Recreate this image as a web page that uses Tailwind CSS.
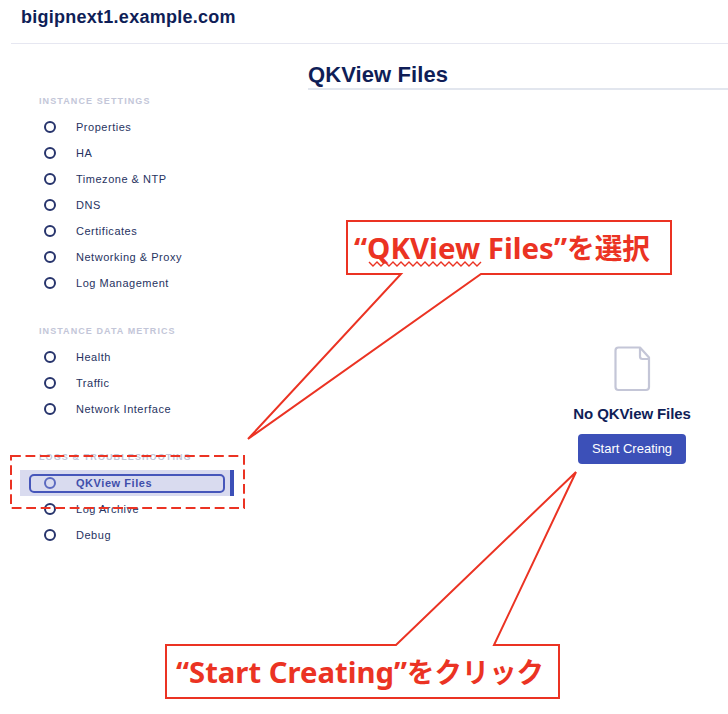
<!DOCTYPE html>
<html lang="ja">
<head>
<meta charset="utf-8">
<title>QKView Files</title>
<script src="https://cdn.jsdelivr.net/npm/@tailwindcss/browser@4"></script>
</head>
<body class="relative h-[714px] w-[728px] overflow-hidden bg-white font-['Liberation_Sans',Arial,sans-serif] text-[#0f1e57]">
<header class="ml-[11px] flex h-[44px] items-center border-b border-[#e6e7f1] pb-[9px] pl-[10px]">
  <h1 class="text-[18px] leading-none font-bold tracking-[0.26px]">bigipnext1.example.com</h1>
</header>
<div class="flex">
  <nav class="flex w-[308px] flex-col gap-[22px] pt-[44.4px] text-[11px] tracking-[0.52px] text-[#27335f]">
    <section>
      <h2 class="flex h-[26px] items-center pt-[1px] pl-[39px] text-[9px] font-bold tracking-[1.1px] text-[#c3c6d8]">INSTANCE SETTINGS</h2>
      <ul>
        <li class="flex h-[26px] items-center pl-[44px]"><i class="mr-[20px] size-[12px] rounded-full border-2 border-[#27346c]"></i>Properties</li>
        <li class="flex h-[26px] items-center pl-[44px]"><i class="mr-[20px] size-[12px] rounded-full border-2 border-[#27346c]"></i>HA</li>
        <li class="flex h-[26px] items-center pl-[44px]"><i class="mr-[20px] size-[12px] rounded-full border-2 border-[#27346c]"></i>Timezone &amp; NTP</li>
        <li class="flex h-[26px] items-center pl-[44px]"><i class="mr-[20px] size-[12px] rounded-full border-2 border-[#27346c]"></i>DNS</li>
        <li class="flex h-[26px] items-center pl-[44px]"><i class="mr-[20px] size-[12px] rounded-full border-2 border-[#27346c]"></i>Certificates</li>
        <li class="flex h-[26px] items-center pl-[44px]"><i class="mr-[20px] size-[12px] rounded-full border-2 border-[#27346c]"></i>Networking &amp; Proxy</li>
        <li class="flex h-[26px] items-center pl-[44px]"><i class="mr-[20px] size-[12px] rounded-full border-2 border-[#27346c]"></i>Log Management</li>
      </ul>
    </section>
    <section>
      <h2 class="flex h-[26px] items-center pt-[1px] pl-[39px] text-[9px] font-bold tracking-[1.07px] text-[#c3c6d8]">INSTANCE DATA METRICS</h2>
      <ul>
        <li class="flex h-[26px] items-center pl-[44px]"><i class="mr-[20px] size-[12px] rounded-full border-2 border-[#27346c]"></i>Health</li>
        <li class="flex h-[26px] items-center pl-[44px]"><i class="mr-[20px] size-[12px] rounded-full border-2 border-[#27346c]"></i>Traffic</li>
        <li class="flex h-[26px] items-center pl-[44px]"><i class="mr-[20px] size-[12px] rounded-full border-2 border-[#27346c]"></i>Network Interface</li>
      </ul>
    </section>
    <section>
      <h2 class="flex h-[26px] items-center pt-[1px] pl-[39px] text-[9px] font-bold tracking-[1.1px] text-[#c3c6d8]">LOGS &amp; TROUBLESHOOTING</h2>
      <ul>
        <li class="ml-[20px] flex h-[26px] w-[214px] items-center border-r-4 border-[#3c50b8] bg-[#d9dbef] pl-[9px] font-bold tracking-[0.55px] text-[#404eab]">
          <span class="flex h-[19px] w-[196px] items-center rounded-[5px] border-2 border-[#4656ba] pl-[13px]"><i class="mr-[20px] size-[12px] rounded-full border-2 border-[#5b69c0]"></i>QKView Files</span>
        </li>
        <li class="flex h-[26px] items-center pl-[44px]"><i class="mr-[20px] size-[12px] rounded-full border-2 border-[#27346c]"></i>Log Archive</li>
        <li class="flex h-[26px] items-center pl-[44px]"><i class="mr-[20px] size-[12px] rounded-full border-2 border-[#27346c]"></i>Debug</li>
      </ul>
    </section>
  </nav>
  <main class="flex flex-1 flex-col">
    <h2 class="flex h-[46px] items-end border-b-2 border-[#e2e6ee] pb-px text-[22px] leading-[24px] font-bold tracking-[0.1px]">QKView Files</h2>
    <div class="mt-[256px] ml-[265px] flex w-[118px] flex-col items-center">
      <svg class="h-[46px] w-[37px]" viewBox="0 0 37 46" fill="none" stroke="#c4c6d7" stroke-width="2.2" stroke-linejoin="round"><path d="M4.500 1.500H26L35 11.500V41Q35 44 32 44H4.500Q1.500 44 1.500 41V4.500Q1.500 1.500 4.500 1.500ZM26 1.500V10.500Q26 13 28.500 13H35"/></svg>
      <p class="mt-[13px] text-[15px] leading-[18px] font-bold tracking-[-0.1px] whitespace-nowrap">No QKView Files</p>
      <button class="mt-[11px] h-[30px] w-[108px] rounded-[4px] bg-[#3c50b8] text-[13px] whitespace-nowrap text-white">Start Creating</button>
    </div>
  </main>
</div>
<svg class="absolute top-0 left-0" width="728" height="714" viewBox="0 0 728 714" fill="none" stroke="#eb3323" stroke-width="2">
  <path d="M11 456H244V508H11Z" stroke-dasharray="9.800 4.700"/>
  <path d="M347 221H671V274H481L248 439L401 274H347Z"/>
  <path d="M166 645H396L576 472L494 645H559V698H166Z"/>
  <path stroke-width="1.4" d="M369 262l4 4 4-4 4 4 4-4 4 4 4-4 4 4 4-4 4 4 4-4 4 4 4-4 4 4 4-4 4 4 4-4 4 4 4-4 4 4 4-4 4 4 4-4 4 4 4-4 4 4 4-4 4 4 4-4"/>
  <g fill="#eb3323" stroke="none" class="font-['Noto_Sans','Noto_Sans_CJK_JP',sans-serif] text-[29px] font-bold">
    <text x="354" y="259" textLength="213" lengthAdjust="spacingAndGlyphs">“QKView Files”</text>
    <text x="567" y="259" textLength="83" lengthAdjust="spacingAndGlyphs" class="text-[28px]">を選択</text>
    <text x="176" y="683" textLength="231" lengthAdjust="spacingAndGlyphs">“Start Creating”</text>
    <text x="407" y="683" textLength="137" lengthAdjust="spacingAndGlyphs" class="text-[28px]">をクリック</text>
  </g>
</svg>
</body>
</html>
